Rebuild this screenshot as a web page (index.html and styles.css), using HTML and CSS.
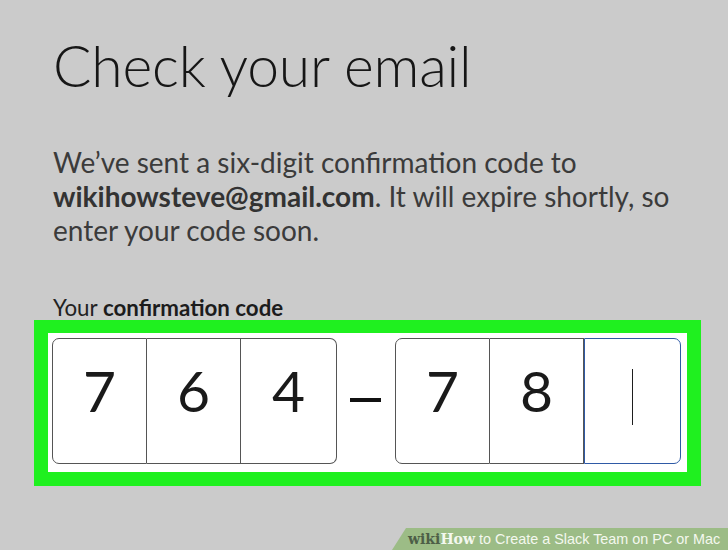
FILE: index.html
```html
<!DOCTYPE html>
<html lang="en">
<head>
<meta charset="utf-8">
<title>Check your email</title>
<link rel="stylesheet" href="styles.css">
</head>
<body>
<main class="page">
  <h1 class="title">Check your email</h1>
  <p class="lead">We’ve sent a six-digit confirmation code to<br><strong>wikihowsteve@gmail.com</strong><span>. It will expire shortly, so</span><br><span>enter your code soon.</span></p>
  <div class="label">Your <strong>confirmation code</strong></div>
  <div class="code-frame">
    <div class="code-row">
      <div class="group">
        <div class="cell">7</div>
        <div class="cell">6</div>
        <div class="cell">4</div>
      </div>
      <div class="dash"></div>
      <div class="group">
        <div class="cell">7</div>
        <div class="cell">8</div>
        <div class="cell focus"><span class="caret"></span></div>
      </div>
    </div>
  </div>
</main>
<div class="watermark"><span class="wk-wiki">wiki</span><span class="wk-how">How</span> to Create a Slack Team on PC or Mac</div>
</body>
</html>
```
FILE: styles.css
```css
html, body {
  margin: 0;
  padding: 0;
}
body {
  width: 728px;
  height: 550px;
  overflow: hidden;
  background: #cbcbcb;
  font-family: Lato, "Open Sans", sans-serif;
  position: relative;
}
.page {
  padding: 29px 0 0 0;
}
.title {
  margin: 0 0 0 53px;
  font-weight: 300;
  font-size: 57px;
  line-height: 72px;
  color: #161616;
  letter-spacing: -0.2px;
}
.lead {
  margin: 44px 0 0 53px;
  width: 660px;
  font-size: 28px;
  line-height: 34px;
  color: #3b3b3b;
  font-weight: 400;
  white-space: nowrap;
}
.lead strong {
  font-weight: 700;
  color: #333;
}
.label {
  margin: 48.5px 0 0 53px;
  font-size: 22.3px;
  line-height: 24px;
  color: #222;
}
.label strong {
  font-weight: 700;
  color: #1c1c1c;
}
.code-frame {
  margin: 0 0 0 34px;
  width: 628px;
  border: 14px solid #1ff01f;
  border-top-width: 13px;
  background: #fff;
  padding: 5px 7px 8px 4px;
}
.code-row {
  display: flex;
  align-items: center;
}
.group {
  display: flex;
  flex: none;
  height: 126px;
}
.cell {
  flex: none;
  width: 94px;
  height: 126px;
  box-sizing: border-box;
  border: 1px solid #555;
  border-left: none;
  display: flex;
  justify-content: center;
  font-size: 57px;
  line-height: 1;
  color: #1a1a1a;
  padding-top: 23px;
}
.cell:first-child {
  width: 95px;
  border-left: 1px solid #555;
  border-radius: 7px 0 0 7px;
}
.cell:last-child {
  width: 96px;
  border-radius: 0 7px 7px 0;
}
.cell.focus {
  border: 1px solid #2f5aa6;
  width: 97px;
  padding-top: 30px;
}
.caret {
  width: 1px;
  height: 56px;
  background: #1e1e1e;
}
.dash {
  flex: none;
  width: 31px;
  height: 4px;
  background: #111;
  margin: -2px 14px 0 13px;
}
.watermark {
  position: absolute;
  left: 392px;
  bottom: 0;
  width: 336px;
  height: 22px;
  background: #9cbc86;
  clip-path: polygon(14px 0, 100% 0, 100% 100%, 0 100%);
  color: #f4f8ef;
  font-family: "Liberation Sans", Arial, sans-serif;
  font-size: 14.4px;
  line-height: 23px;
  padding-left: 16px;
  box-sizing: border-box;
  white-space: nowrap;
}
.wk-wiki, .wk-how {
  font-family: "DejaVu Serif", "Liberation Serif", serif;
  font-weight: 700;
  font-size: 14px;
}
.wk-wiki {
  color: #4d5e47;
}
.wk-how {
  color: #f4f8ef;
}
```
